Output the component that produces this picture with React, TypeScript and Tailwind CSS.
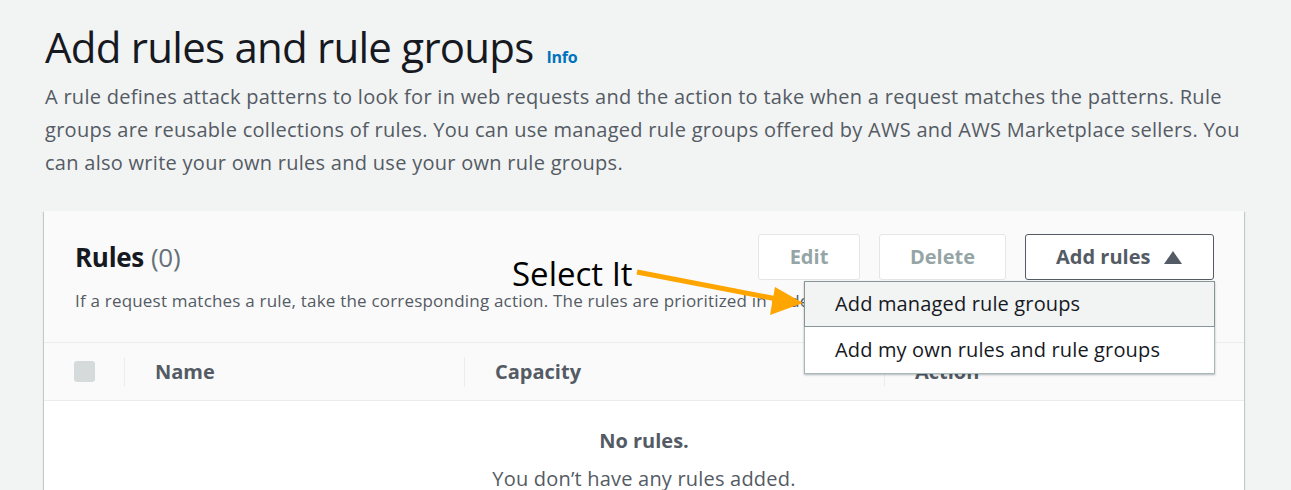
const font = "font-['Open_Sans',sans-serif]"

function Divider() {
  return <div className="w-px h-[30px] bg-[#eaeded] flex-shrink-0" />
}

export default function App() {
  return (
    <div className={`relative w-[1291px] h-[490px] overflow-hidden bg-[#f2f3f3] ${font}`}>
      {/* Page header */}
      <div className="pl-[45px] pt-[21px] pr-[40px]">
        <div className="flex items-baseline gap-[13px]">
          <h1 className="text-[42px] leading-[52px] text-[#16191f] tracking-[-0.75px]">Add rules and rule groups</h1>
          <span className="text-[16px] font-bold text-[#0073bb] tracking-[-0.3px]">Info</span>
        </div>
        <p className="mt-[7px] text-[20px] leading-[33px] text-[#545b64] tracking-[0.28px] whitespace-nowrap">
          A rule defines attack patterns to look for in web requests and the action to take when a request matches the patterns. Rule
          <br />
          groups are reusable collections of rules. You can use managed rule groups offered by AWS and AWS Marketplace sellers. You
          <br />
          can also write your own rules and use your own rule groups.
        </p>
      </div>

      {/* Rules panel */}
      <div className="ml-[44px] mr-[47px] mt-[32px] bg-white shadow-[0_1px_1px_0_rgba(0,28,36,0.3),1px_1px_1px_0_rgba(0,28,36,0.15),-1px_1px_1px_0_rgba(0,28,36,0.15)]">
        <div className="h-[132px] bg-[#fafafa] border-b border-[#eaeded] pl-[31px] pr-[30px] pt-[23px]">
          <div className="flex items-start justify-between">
            <h2 className="h-[46px] flex items-center text-[26px] font-bold text-[#16191f] tracking-[-0.3px]">
              Rules<span className="ml-[7px] font-normal text-[#687078]">(0)</span>
            </h2>
            <div className="flex gap-[19px]">
              <button className="w-[102px] h-[46px] rounded-[3px] border border-[#e3e6e6] bg-white text-[20px] font-bold text-[#95a5a6]">Edit</button>
              <button className="w-[127px] h-[46px] rounded-[3px] border border-[#e3e6e6] bg-white text-[20px] font-bold text-[#95a5a6]">Delete</button>
              <button className="w-[189px] h-[46px] rounded-[3px] border border-[#545b64] bg-white text-[20px] font-bold text-[#545b64] flex items-center pl-[30px] gap-[14px]">
                Add rules
                <svg width="18" height="13" viewBox="0 0 18 13"><path d="M9 0 L18 13 L0 13 Z" fill="#545b64" /></svg>
              </button>
            </div>
          </div>
          <p className="mt-[9px] text-[17px] leading-[24px] text-[#545b64] tracking-[0.2px] whitespace-nowrap">
            If a request matches a rule, take the corresponding action. The rules are prioritized in order they appear.
          </p>
        </div>

        {/* Table header */}
        <div className="h-[58px] bg-[#fafafa] border-b border-[#eaeded] flex items-center text-[20px] font-bold text-[#545b64]">
          <div className="w-[80px] pl-[30px] flex-shrink-0">
            <div className="w-[21px] h-[21px] rounded-[3px] bg-[#d5dbdb]" />
          </div>
          <Divider />
          <div className="w-[339px] pl-[30px] flex-shrink-0">Name</div>
          <Divider />
          <div className="w-[419px] pl-[30px] flex-shrink-0">Capacity</div>
          <Divider />
          <div className="pl-[30px]">Action</div>
        </div>

        {/* Empty state */}
        <div className="text-center text-[#545b64] text-[20px] pt-[26px]">
          <p className="font-bold leading-[28px]">No rules.</p>
          <p className="mt-[10px] leading-[28px] tracking-[0.2px]">You don’t have any rules added.</p>
        </div>
      </div>

      {/* Open dropdown */}
      <div className="absolute left-[804px] top-[281px] w-[411px] bg-white border border-[#aab7b8] shadow-[0_1px_2px_rgba(0,28,36,0.3)] text-[20px] text-[#16191f] tracking-[0.15px]">
        <div className="h-[46px] flex items-center pl-[30px] bg-[#f2f3f3] border border-[#879596] -m-px mb-0">Add managed rule groups</div>
        <div className="h-[46px] flex items-center pl-[30px]">Add my own rules and rule groups</div>
      </div>

      {/* Annotation */}
      <span className="absolute left-[512px] top-[257px] text-[33px] leading-[33px] text-black">Select It</span>
      <svg className="absolute left-0 top-0 pointer-events-none" width="1291" height="490">
        <line x1="637" y1="272" x2="782" y2="300" stroke="#ffa500" strokeWidth="5" />
        <polygon points="803,303 775,287 770,315" fill="#ffa500" />
      </svg>
    </div>
  )
}
